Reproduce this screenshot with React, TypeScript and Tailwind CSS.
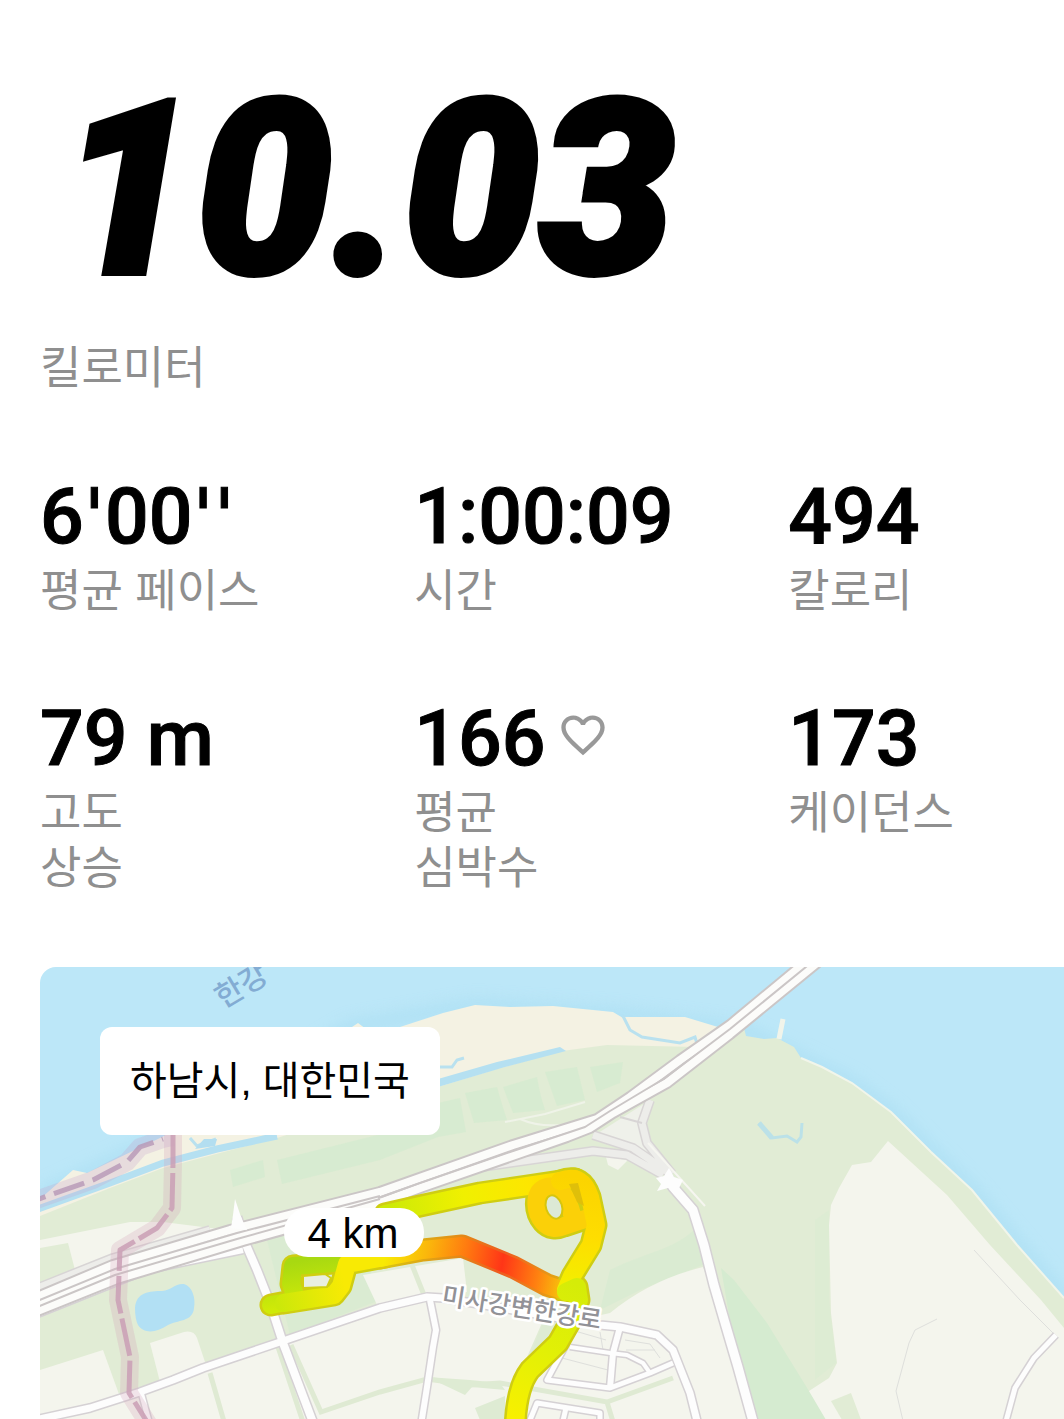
import React from 'react'
import { MdFavoriteBorder } from 'react-icons/md'

const STATS = [
  { value: "6'00''", lines: ['평균 페이스'] },
  { value: '1:00:09', lines: ['시간'] },
  { value: '494', lines: ['칼로리'] },
  { value: '79 m', lines: ['고도', '상승'] },
  { value: '166', lines: ['평균', '심박수'], heart: true },
  { value: '173', lines: ['케이던스'] },
]

// white roads, drawn twice: casing first, then fill
const ROADS = [
  { d: 'M30 1421 90 1408 140 1392 173 1380 203 1368 280 1342 380 1308 427 1297 443 1298 600 1325 620 1327 657 1335 673 1350 690 1393 698 1425', w: 7 },
  { d: 'M237 1217 247 1247 257 1270 270 1303 283 1343 314 1425', w: 8 },
  { d: 'M430 1300 436 1330 433 1347 427 1387 421 1425', w: 6 },
  { d: 'M141 1392 150 1425', w: 5 },
  { d: 'M567 1343 547 1380 610 1388 650 1373 673 1363', w: 5 },
  { d: 'M570 1347 610 1353 627 1355 643 1363 650 1373', w: 4 },
  { d: 'M620 1327 613 1353 610 1388', w: 6 },
  { d: 'M528 1425 537 1403 600 1413 600 1425M566 1408 562 1425', w: 5 },
  { d: 'M666 1176 673 1187 693 1210 704 1245 714 1285 728 1333 738 1367 754 1425', w: 9 },
  { d: 'M1056 1335 1034 1358 1015 1388 1005 1425', w: 5 },
  { d: 'M30 1317 147 1270 243 1250', w: 6 },
]

const HIGHWAY = [
  'M30 1300 113 1265 230 1230 380 1192 513 1145 597 1119 630 1097 680 1060 730 1025 806 962',
  'M30 1314 117 1279 243 1241 380 1203 423 1187 567 1137 590 1128 613 1113 667 1083 730 1034 818 962',
]

const ROUTE = [
  { d: 'M271 1305 297 1300 291 1284 293 1266 333 1263', c: 'url(#lime)' },
  { d: 'M284 1303 303 1300 334 1295 341 1286 347 1264 385 1257', c: 'url(#left)' },
  { d: 'M380 1258 423 1250 462 1246 513 1267 547 1285 568 1292', c: 'url(#heat)' },
  { d: 'M385 1214 420 1206 480 1193 527 1186 575 1179', c: 'url(#top)' },
  { d: 'M544 1188C533 1194 535 1213 543 1222C549 1229 557 1229 564 1226L588 1218M544 1188C556 1183 567 1192 573 1218', c: '#fbd008' },
  { d: 'M560 1181C577 1175 585 1182 590 1197L596 1225 591 1245 572 1276 566 1290', c: 'url(#side)' },
  { d: 'M566 1292 577 1287 579 1300 570 1322 558 1343 530 1370Q516 1388 515 1430', c: 'url(#down)' },
]

const KR = "font-['Liberation_Sans','Noto_Sans_CJK_KR',sans-serif]"

function RunMap() {
  return (
    <svg viewBox="40 967 1024 453" className="block w-full" role="img" aria-label="Map">
      <defs>
        <linearGradient id="lime" gradientUnits="userSpaceOnUse" x1="293" y1="1262" x2="300" y2="1305">
          <stop offset="0" stopColor="#a8d911" /><stop offset="1" stopColor="#cfea08" />
        </linearGradient>
        <linearGradient id="left" gradientUnits="userSpaceOnUse" x1="275" y1="1300" x2="345" y2="1285">
          <stop offset="0" stopColor="#cae80a" /><stop offset="1" stopColor="#f8ea04" />
        </linearGradient>
        <linearGradient id="heat" gradientUnits="userSpaceOnUse" x1="385" y1="1255" x2="570" y2="1290">
          <stop offset="0" stopColor="#f8ea04" /><stop offset=".22" stopColor="#fbb60b" />
          <stop offset=".42" stopColor="#ff7a10" /><stop offset=".62" stopColor="#ff3517" />
          <stop offset=".82" stopColor="#ff8210" /><stop offset="1" stopColor="#f5d80a" />
        </linearGradient>
        <linearGradient id="heatEdge" gradientUnits="userSpaceOnUse" x1="385" y1="1255" x2="570" y2="1290">
          <stop offset="0" stopColor="#d8c810" /><stop offset=".42" stopColor="#e58318" />
          <stop offset=".62" stopColor="#ee5a20" /><stop offset=".85" stopColor="#e89018" /><stop offset="1" stopColor="#d9c010" />
        </linearGradient>
        <linearGradient id="top" gradientUnits="userSpaceOnUse" x1="390" y1="1210" x2="575" y2="1180">
          <stop offset="0" stopColor="#cdea08" /><stop offset=".4" stopColor="#f0f000" />
          <stop offset=".75" stopColor="#fde600" /><stop offset="1" stopColor="#fbd400" />
        </linearGradient>
        <linearGradient id="side" gradientUnits="userSpaceOnUse" x1="590" y1="1180" x2="570" y2="1290">
          <stop offset="0" stopColor="#fbd400" /><stop offset=".5" stopColor="#fedd00" /><stop offset="1" stopColor="#f2f000" />
        </linearGradient>
        <linearGradient id="down" gradientUnits="userSpaceOnUse" x1="580" y1="1285" x2="514" y2="1419">
          <stop offset="0" stopColor="#d5ec08" /><stop offset=".5" stopColor="#e2f006" /><stop offset="1" stopColor="#f8f000" />
        </linearGradient>
        <filter id="soft" x="-10%" y="-10%" width="120%" height="120%"><feGaussianBlur stdDeviation="7" /></filter>
      </defs>
      <rect x="40" y="967" width="1024" height="460" fill="#bce7f8" />

      {/* shore shade and sand */}
      <path d="M40 1195 162 1137 350 1027 475 1005 623 1015 744 1030 801 1058 852 1083 891 1112 972 1190 1064 1298" fill="none" stroke="#a9def2" strokeWidth="14" opacity=".6" filter="url(#soft)" />
      <path d="M40 1199 73 1170 87 1173 162 1137 300 1060 346 1031 358 1023 366 1029 400 1027 443 1013 475 1005 510 1007 553 1006 613 1012 623 1018 625 1017 685 1017 718 1027 744 1030V1100L300 1240H40Z" fill="#f4f2e3" />
      <path d="M40 1216 110 1188 163 1168 277 1138 438 1087 497 1069 562 1051 607 1045 697 1047 717 1028 744 1028 746 1036 764 1039 777 1038 794 1047 801 1058 822 1067 852 1083 891 1112 931 1152 972 1190 1017 1245 1064 1298V1425H40Z" fill="#e1ecd5" />
      <path d="M801 1058 822 1067 852 1083 891 1112 931 1152 972 1190 1017 1245 1064 1298" fill="none" stroke="#f1f5ea" strokeWidth="2" />
      <path d="M38 1209 110 1183 163 1163 217 1149 277 1136" fill="none" stroke="#b5e0f1" strokeWidth="7" />
      <path d="M438 1079 497 1062 560 1047 566 1051 505 1067 438 1087Z" fill="#b5e0f1" />
      <path d="M438 1067 452 1067 457 1060 464 1058M623 1016 630 1030 642 1037 680 1043 695 1037 698 1047M190 1138 197 1146 216 1139" fill="none" stroke="#b9e1ef" strokeWidth="3" />
      <path d="M195 1149 204 1139H217L215 1146Z" fill="#b3def0" />
      <path d="M783 1019 779 1039" stroke="#f1f4ea" strokeWidth="5" />
      <path d="M759 1123 772 1138 787 1136 797 1142 801 1137 802 1123" fill="none" stroke="#bbe1e8" strokeWidth="3" />
      <path d="M759 1123 772 1138" stroke="#bbe1e8" strokeWidth="5" />

      {/* fields */}
      <g fill="#d5ebd0">
        <path d="M465 1093 497 1087Q502 1105 507 1120L474 1123ZM503 1087 537 1077Q540 1095 545 1110L513 1113ZM545 1072 577 1067 585 1100 557 1106ZM590 1067 623 1062 620 1083 597 1092ZM438 1103 460 1098 466 1132 438 1137ZM230 1170 263 1160 265 1177 233 1187ZM277 1160 438 1120V1137L380 1160 282 1184Z" opacity=".8" />
        <path d="M721 1268 734 1280 767 1323 809 1391 827 1419V1425H757L735 1350Z" />
        <path d="M610 1270C650 1250 680 1250 703 1220L710 1262 640 1290 600 1310Z" opacity=".6" />
        <path d="M815 1220 829 1210V1300L836 1363 815 1380Z" opacity=".3" />
        <path d="M267 1240 300 1225 370 1270 380 1300 290 1335Z" opacity=".6" />
      </g>
      <g fill="#f4f5ed">
        <path d="M888 1141 871 1162 852 1165 839 1188 831 1205 829 1225 831 1313 837 1363 829 1378 809 1391 829 1425H1064V1328L1041 1300 990 1245 947 1195Z" />
        <path d="M40 1240 130 1222 163 1222 227 1230 113 1263 60 1288 75 1270 68 1243 40 1248Z" />
        <path d="M40 1370 103 1350 120 1397 40 1422Z" />
        <path d="M150 1343 184 1332Q194 1330 197 1338L206 1365 160 1382Z" />
        <path d="M363 1275 463 1258 467 1292 427 1297 378 1307Z" />
        <path d="M40 1422 140 1393 280 1343 427 1297 468 1302 545 1316 527 1357 512 1380 570 1322 610 1313Q650 1280 703 1267L735 1350 757 1425H40Z" />
        <path d="M606 1157 628 1160 618 1170 608 1165Z" />
        <path d="M595 1135 650 1100 645 1140 667 1172 640 1160Z" fill="#eff1ea" />
      </g>
      <path d="M831 1401 851 1393 863 1425H845Z" fill="#e1ecd5" />
      <path d="M210 1373 225 1425M278 1347 304 1425M291 1345 321 1412 380 1392 427 1379 470 1385 500 1383 607 1402 673 1378M607 1402 614 1425M410 1260 424 1295" fill="none" stroke="#dfead3" strokeWidth="5" />
      <path d="M427 1377 470 1380 500 1383 505 1390 472 1387 465 1395Z M475 1408 505 1396V1425H482ZM545 1318 530 1355 560 1340Z" fill="#deebd3" />
      <path d="M135 1308C136 1292 150 1291 162 1291C172 1290 175 1283 184 1284C192 1286 196 1298 194 1308C193 1322 177 1320 168 1325C155 1334 143 1333 138 1325Q135 1319 135 1308Z" fill="#b2e0f4" />
      <path d="M974 1250 1020 1300 1053 1333M937 1319 915 1330 909 1343 896 1391 904 1425M575 1331 606 1340M562 1358 608 1370M600 1332 603 1350M625 1340 650 1344 660 1358M626 1350 655 1350" fill="none" stroke="#dedfdc" strokeWidth="1" />
      <path d="M505 1122 545 1114 585 1102M520 1119Q545 1130 580 1122" fill="none" stroke="#eff3e8" strokeWidth="2" />

      {/* roads */}
      <g fill="none" strokeLinejoin="round">
        <path d="M30 1291 113 1258 210 1230M460 1170 593 1151 627 1155 663 1175M593 1135 633 1148 668 1172M650 1100 642 1123 647 1143 672 1174" stroke="#d8d5d5" strokeWidth="10" />
        <path d="M30 1291 113 1258 210 1230M460 1170 593 1151 627 1155 663 1175M593 1135 633 1148 668 1172M650 1100 642 1123 647 1143 672 1174" stroke="#ededea" strokeWidth="7" />
        <path d="M620 1117 642 1123" stroke="#d8d5d5" strokeWidth="2" />
        <path d="M648 1143 705 1206" stroke="#f6f6f0" strokeWidth="2" />
        {ROADS.map(r => <path key={r.d} d={r.d} stroke="#d5d1d4" strokeWidth={r.w + 3} />)}
        {ROADS.map(r => <path key={r.d} d={r.d} stroke="#fdfdfd" strokeWidth={r.w} />)}
        {HIGHWAY.map(d => <path key={d} d={d} stroke="#cbc6c6" strokeWidth="12" />)}
        {HIGHWAY.map(d => <path key={d} d={d} stroke="#fcfcfa" strokeWidth="8" />)}
        <path d="M30 1307 115 1272 237 1236 380 1197" stroke="#fcfcfa" strokeWidth="8" />
        <path d="M30 1304 115 1269 237 1233 380 1196M30 1310 115 1275 237 1239 380 1199" stroke="#cbc6c6" strokeWidth="2" />
        <path d="M378 1198 420 1183 513 1151 585 1127 610 1111 665 1078 730 1029 812 962" stroke="#cbc6c6" strokeWidth="2" />
      </g>
      <path d="M235 1199 241 1217 247 1230 231 1228 233 1215ZM656 1178 664 1176 669 1168 674 1177 683 1180 678 1190 668 1188 657 1191 661 1184Z" fill="#fdfdfd" />

      {/* district border */}
      <g fill="none" strokeLinejoin="round">
        <path d="M173 1130V1163L172 1208 157 1228 120 1250 118 1300 130 1357 129 1393 149 1425" stroke="#d3a5bb" strokeWidth="18" opacity=".28" />
        <path d="M36 1200 93 1180 127 1162 140 1147 163 1139 173 1137" stroke="#c7a6cb" strokeWidth="18" opacity=".28" />
        <path d="M173 1130V1163L172 1208 157 1228 120 1250 118 1300 130 1357 129 1393 149 1425" stroke="#ca9fb5" strokeWidth="5" strokeDasharray="38 5" opacity=".85" />
        <path d="M36 1200 93 1180 127 1162 140 1147 163 1139" stroke="#b99bb9" strokeWidth="5" strokeDasharray="32 9" strokeDashoffset="22" opacity=".85" />
      </g>

      {/* run track */}
      <g fill="none" strokeLinecap="round" strokeLinejoin="round">
        {ROUTE.map(r => <path key={r.d} d={r.d} stroke={r.c === 'url(#heat)' ? 'url(#heatEdge)' : '#cfcd12'} strokeWidth="23" />)}
        {ROUTE.map(r => <path key={r.d} d={r.d} stroke={r.c} strokeWidth="18" />)}
        <path d="M569 1184 578 1183 584 1206 577 1202Z" fill="#dfbf0a" />
        <ellipse cx="554" cy="1207" rx="8" ry="12" transform="rotate(-18 554 1207)" fill="#dce9d5" stroke="#d6c50e" strokeWidth="2" />
        <path d="M303 1276 325 1274 331 1278 327 1287 303 1288Z" fill="#e9efe0" stroke="#d0cf10" strokeWidth="2" />
      </g>

      <g className={KR}>
        <text transform="translate(223 1009) rotate(-31)" fontSize="30" fontWeight="500" fill="#83acd3">한강</text>
        <text transform="translate(441 1304) rotate(9)" fontSize="25" fontWeight="500" fill="#929297" stroke="#fff" strokeWidth="5" strokeLinejoin="round" paintOrder="stroke">미사강변한강로</text>
        <rect x="284" y="1208" width="140" height="49" rx="24" fill="#fff" />
        <text x="353" y="1248" textAnchor="middle" fontSize="42">4 km</text>
      </g>
    </svg>
  )
}

export default function App() {
  return (
    <main className={`min-h-screen overflow-hidden bg-white pl-10 pt-10 text-black ${KR}`}>
      <h1 className="pl-5 font-['Roboto',sans-serif] text-[242px] font-black italic leading-[301px] [-webkit-text-stroke:6px_black]">10.03</h1>
      <p className="text-[45px] leading-[55px] text-[#8f8f8f]">킬로미터</p>

      <dl className="mt-19 grid grid-cols-[19fr_19fr_14fr] gap-y-[75px]">
        {STATS.map(s => (
          <div key={s.value} className="flex flex-col-reverse justify-end">
            <dt className="text-[45px] leading-[55px] text-[#8f8f8f]">
              {s.lines.map(l => <span key={l} className="block whitespace-nowrap">{l}</span>)}
            </dt>
            <dd className="flex items-center gap-3 whitespace-nowrap pb-0.5 font-['Roboto',sans-serif] text-[77px] font-medium leading-[90px] [-webkit-text-stroke:1px_black]">
              <span>
                {s.value.split(/(')/).map((t, i) => t === "'" ? <span key={i} className="font-['DejaVu_Sans',sans-serif]">'</span> : t)}
              </span>
              {s.heart && <MdFavoriteBorder size={52} className="mb-2 text-[#999999]" />}
            </dd>
          </div>
        ))}
      </dl>

      <section className="relative mt-[71px] overflow-hidden rounded-tl-2xl">
        <RunMap />
        <p className="absolute left-15 top-15 rounded-xl bg-white px-[30px] py-6 text-[40px] leading-[60px]">하남시, 대한민국</p>
      </section>
    </main>
  )
}
